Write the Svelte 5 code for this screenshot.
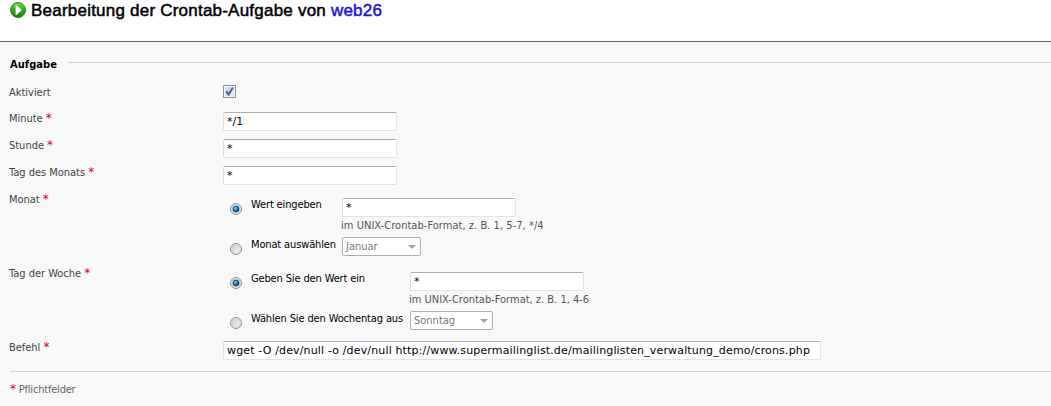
<script>
  const simple = [
    { label: 'Minute', value: '*/1' },
    { label: 'Stunde', value: '*' },
    { label: 'Tag des Monats', value: '*' }
  ];
  const groups = [
    { id: 'month', label: 'Monat', enter: 'Wert eingeben', hint: 'im UNIX-Crontab-Format, z. B. 1, 5-7, */4', pick: 'Monat auswählen', option: 'Januar' },
    { id: 'weekday', label: 'Tag der Woche', enter: 'Geben Sie den Wert ein', hint: 'im UNIX-Crontab-Format, z. B. 1, 4-6', pick: 'Wählen Sie den Wochentag aus', option: 'Sonntag' }
  ];
</script>

{#snippet radio(on)}
  <svg class="radio" width="12" height="12" viewBox="0 0 12 12">
    <circle cx="6" cy="6" r="5.5" fill="#f4f4f4" stroke="#8e8f8f" />
    <circle cx="6" cy="6" r="4.1" fill={on ? '#e0e5e9' : 'url(#off)'} stroke={on ? '#b4bcc4' : '#c4c8cc'} stroke-width=".7" />
    {#if on}
      <circle cx="6" cy="6" r="3" fill="url(#dot)" stroke="#12496e" stroke-width=".8" />
    {/if}
  </svg>
{/snippet}

<svg class="defs" width="0" height="0">
  <defs>
    <radialGradient id="dot" cx="40%" cy="38%"><stop offset="0" stop-color="#8fe0fa" /><stop offset=".6" stop-color="#2487b8" /><stop offset="1" stop-color="#15506f" /></radialGradient>
    <linearGradient id="off" x1="0" y1="0" x2="1" y2="1"><stop offset="0" stop-color="#c6c9cc" /><stop offset="1" stop-color="#fafafa" /></linearGradient>
    <linearGradient id="green" x1="0" y1="0" x2="0" y2="1"><stop offset="0" stop-color="#7ed75c" /><stop offset=".5" stop-color="#35a51e" /><stop offset="1" stop-color="#14780c" /></linearGradient>
    <linearGradient id="box" x1="0" y1="0" x2="1" y2="1"><stop offset="0" stop-color="#c9cdd2" /><stop offset="1" stop-color="#f8f8f8" /></linearGradient>
  </defs>
</svg>

<header>
  <svg width="16" height="16" viewBox="0 0 16 16">
    <circle cx="8" cy="8" r="7.5" fill="url(#green)" stroke="#2c8a1c" />
    <path d="M6 3L11.5 8L6 13Z" fill="#fff" stroke="#e6f8de" stroke-width=".8" />
  </svg>
  <h1>Bearbeitung der Crontab-Aufgabe von <span>web26</span></h1>
</header>

<main>
  <div class="legend"><b>Aufgabe</b><i></i></div>
  <div class="row active">
    <span class="label">Aktiviert</span>
    <svg width="13" height="13" viewBox="0 0 13 13">
      <rect x=".5" y=".5" width="12" height="12" fill="#f4f4f4" stroke="#8e8f8f" />
      <rect x="2.5" y="2.5" width="8" height="8" fill="url(#box)" stroke="#dde0e4" />
      <path d="M3.3 6.4L5.6 9.5L9.9 2.5" fill="none" stroke="#4560a8" stroke-width="2" />
    </svg>
  </div>
  {#each simple as f}
    <div class="row">
      <span class="label">{f.label} <em>*</em></span>
      <div class="input">{f.value}</div>
    </div>
  {/each}
  {#each groups as g}
    <div class="row group {g.id}">
      <span class="label">{g.label} <em>*</em></span>
      <div class="choices">
        <div class="choice first">
          {@render radio(true)}
          <span class="name">{g.enter}</span>
          <div class="control"><div class="input">*</div><span class="hint">{g.hint}</span></div>
        </div>
        <div class="choice">
          {@render radio(false)}
          <span class="name">{g.pick}</span>
          <div class="select"><span>{g.option}</span><svg width="8" height="4" viewBox="0 0 8 4"><path d="M0 0H8L4 4Z" fill="#a0a0a0" /></svg></div>
        </div>
      </div>
    </div>
  {/each}
  <div class="row command">
    <span class="label">Befehl <em>*</em></span>
    <div class="input wide">wget -O /dev/null -o /dev/null http://www.supermailinglist.de/mailinglisten_verwaltung_demo/crons.php</div>
  </div>
  <footer><em>*</em> <span>Pflichtfelder</span></footer>
</main>

<style>
  :global(body) { margin: 0; background: #f8f8f8; overflow: hidden; }
  :global(#app) { font: 11px/14px "DejaVu Sans Condensed", "DejaVu Sans", sans-serif; font-stretch: condensed; color: #444; white-space: nowrap; }
  .defs { display: block; height: 0; }
  header { box-sizing: border-box; height: 42px; padding: 2px 0 0 10px; display: flex; align-items: flex-start; gap: 5px; background: #fff; border-bottom: 1px solid #6b625e; }
  header svg { display: block; }
  h1 { margin: -1px 0 0; font: 500 17px/20px "Liberation Sans", sans-serif; color: #000; -webkit-text-stroke: .5px currentColor; letter-spacing: .22px; }
  h1 span { color: #1616e0; }
  main { height: 364px; box-sizing: border-box; padding: 15px 0 0 10px; background: #f8f8f8; }
  .legend { height: 28px; display: flex; align-items: flex-start; }
  .legend b { width: 58px; margin-top: 1px; color: #000; letter-spacing: .05px; }
  .legend i { flex: 1; height: 1px; margin-top: 5px; background: #d0d0d0; }
  .row { height: 27px; display: grid; grid-template-columns: 213px 1fr; align-items: start; }
  .label { margin: 0 0 0 -1px; letter-spacing: -.02px; }
  .active .label { margin-top: 1px; }
  em { font: 12px/10px "DejaVu Sans", sans-serif; color: #d4002a; }
  .input { box-sizing: border-box; width: 174px; height: 19px; padding: 2px 3px 0; border: 1px solid #e2e3ea; border-top-color: #abadb3; border-left-color: #dbdfe6; border-radius: 2px; background: #fff; color: #000; font: 11px/14px "DejaVu Sans", sans-serif; }
  .wide { width: 598px; letter-spacing: .15px; }
  .group { height: 74px; }
  .choice { display: grid; grid-template-columns: 28px 91px 1fr; align-items: start; height: 35px; }
  .weekday .choice { grid-template-columns: 28px 159px 1fr; }
  .first { height: 39px; padding-top: 5px; }
  .radio { margin: 5px 0 0 7px; }
  .name { color: #000; letter-spacing: -.14px; }
  .choice:not(.first) .name { margin-top: 1px; }
  .choice:not(.first) .radio { margin-top: 6px; }
  .hint { display: block; margin: 2px 0 0 -1px; color: #555; letter-spacing: .04px; }
  .weekday .hint { letter-spacing: 0; }
  .select { box-sizing: border-box; width: 79px; height: 19px; padding: 1px 4px 0 3px; border: 1px solid #aeaeae; border-radius: 2px; background: #fff; color: #777; display: flex; justify-content: space-between; align-items: center; }
  .weekday .select { width: 83px; }
  .command { height: 30px; }
  footer { border-top: 1px solid #d0d0d0; padding-top: 11px; color: #666; letter-spacing: -.2px; }
</style>
